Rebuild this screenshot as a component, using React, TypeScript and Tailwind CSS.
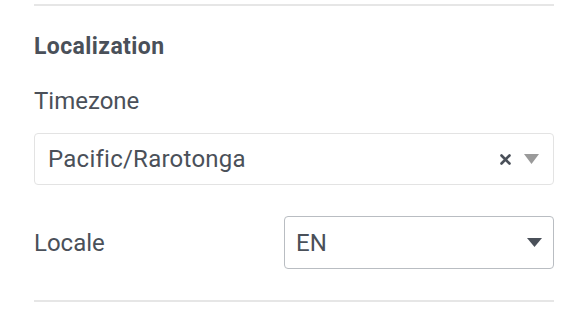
import React from "react";

export default function App() {
  return (
    <div
      className="w-[578px] h-[320px] bg-white pl-[34px] pr-[24px] pt-[4px] text-[#4a5059]"
      style={{ fontFamily: "Roboto, 'Liberation Sans', sans-serif" }}
    >
      <div className="h-[2px] bg-[#e6e6e6]" />
      <div className="pt-[28px] text-[23px] leading-[26px] font-bold tracking-[0.4px]">Localization</div>
      <div className="mt-[27px] text-[24px] leading-[28px]">Timezone</div>
      <div className="mt-[18px] h-[52px] rounded-[4px] border border-[#e3e3e3] flex items-center pl-[13px] pr-[14px]">
        <span className="flex-1 text-[24px] leading-[28px] tracking-[0.25px] text-[#4a5059]">Pacific/Rarotonga</span>
        <svg width="11" height="11" viewBox="0 0 11 11" className="mr-[13px]">
          <path d="M1.5 1.5 L9.5 9.5 M9.5 1.5 L1.5 9.5" stroke="#4a5059" strokeWidth="2.6" strokeLinecap="round" />
        </svg>
        <svg width="15" height="10" viewBox="0 0 15 10">
          <path d="M0 0 H15 L7.5 10 Z" fill="#9a9a9a" />
        </svg>
      </div>
      <div className="mt-[31px] flex items-center">
        <div className="w-[250px] text-[24px] leading-[28px]">Locale</div>
        <div className="flex-1 h-[53px] rounded-[4px] border border-[#b9bdc2] flex items-center pl-[11px] pr-[11px]">
          <span className="flex-1 text-[24px] leading-[28px]">EN</span>
          <svg width="15" height="9" viewBox="0 0 15 9">
            <path d="M0 0 H15 L7.5 9 Z" fill="#4a5059" />
          </svg>
        </div>
      </div>
      <div className="mt-[31px] h-[2px] bg-[#e6e6e6]" />
    </div>
  );
}
